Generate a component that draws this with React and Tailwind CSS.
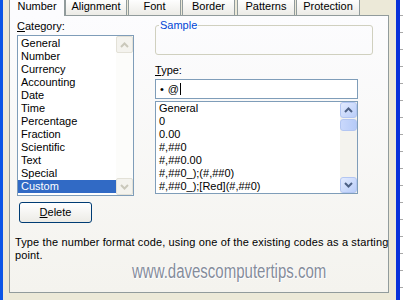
import React from "react";

function Chevron({ dir, color }) {
  return (
    <svg width="9" height="6" viewBox="0 0 9 6" className="block">
      <path
        d={dir === "up" ? "M1 5 L4.5 1.5 L8 5" : "M1 1 L4.5 4.5 L8 1"}
        fill="none"
        stroke={color}
        strokeWidth="2"
      />
    </svg>
  );
}

function Btn({ dir, disabled, h }) {
  return disabled ? (
    <div className={`w-[17px] ${h} flex items-center justify-center rounded-[2px] border border-[#E3E1D7] bg-[#F4F3EE]`}>
      <Chevron dir={dir} color="#CAC8BB" />
    </div>
  ) : (
    <div className={`w-[17px] ${h} flex items-center justify-center rounded-[3px] border border-[#B3C6F2] bg-linear-to-br from-[#E3EBFE] to-[#B9CDF9]`}>
      <Chevron dir={dir} color="#4D6185" />
    </div>
  );
}

const categories = [
  "General",
  "Number",
  "Currency",
  "Accounting",
  "Date",
  "Time",
  "Percentage",
  "Fraction",
  "Scientific",
  "Text",
  "Special",
  "Custom",
];

const formats = [
  "General",
  "0",
  "0.00",
  "#,##0",
  "#,##0.00",
  "#,##0_);(#,##0)",
  "#,##0_);[Red](#,##0)",
];

export default function App() {
  return (
    <div className="w-[403px] h-[300px] flex overflow-hidden bg-[#ECE9D8] font-['Liberation_Sans',Arial,sans-serif] text-[11px] leading-[13px] text-black">
      <div className="w-[3px] h-full shrink-0 bg-[#0A55E6]" />
      <div className="w-[393px] h-full shrink-0 flex flex-col pl-[6px] pr-[7px]">
        {/* tabs */}
        <div className="h-[15px] flex items-start shrink-0">
          <div className="relative z-10 w-[56px] h-[16px] bg-[#FCFCFE] border-x border-[#919B9C] text-center">
            Number
          </div>
          <div className="w-[62px] h-[15px] bg-linear-to-b from-[#FEFEFE] to-[#ECEBE6] border-x border-[#919B9C] text-center">
            Alignment
          </div>
          <div className="ml-[1px] w-[53px] h-[15px] bg-linear-to-b from-[#FEFEFE] to-[#ECEBE6] border-x border-[#919B9C] text-center">
            Font
          </div>
          <div className="ml-[1px] w-[53px] h-[15px] bg-linear-to-b from-[#FEFEFE] to-[#ECEBE6] border-x border-[#919B9C] text-center">
            Border
          </div>
          <div className="ml-[2px] w-[58px] h-[15px] bg-linear-to-b from-[#FEFEFE] to-[#ECEBE6] border-x border-[#919B9C] text-center">
            Patterns
          </div>
          <div className="ml-[1px] w-[64px] h-[15px] bg-linear-to-b from-[#FEFEFE] to-[#ECEBE6] border-x border-[#919B9C] text-center">
            Protection
          </div>
        </div>

        {/* panel */}
        <div className="relative h-[278px] shrink-0 border border-[#919B9C] bg-linear-to-b from-[#FCFCFE] to-[#F4F3EE] pl-[5px]">
          <div className="flex">
            {/* left column */}
            <div className="ml-[2px] w-[117px] pt-[4px]">
              <div>
                <span className="underline">C</span>ategory:
              </div>
              <div className="mt-[2px] h-[161px] border border-[#7F9DB9] bg-white flex">
                <div className="flex-1 pt-[1px]">
                  {categories.map((c) => (
                    <div
                      key={c}
                      className={`h-[13px] pl-[3px] whitespace-nowrap ${
                        c === "Custom" ? "bg-[#316AC5] text-white" : ""
                      }`}
                    >
                      {c}
                    </div>
                  ))}
                </div>
                <div className="w-[17px] bg-[#FCFCFA] flex flex-col justify-between">
                  <Btn dir="up" disabled h="h-[17px]" />
                  <Btn dir="down" disabled h="h-[17px]" />
                </div>
              </div>
              <div className="mt-[6px] ml-[2px] w-[73px] h-[21px] rounded-[3px] border border-[#003C74] bg-linear-to-b from-[#FFFFFF] to-[#ECEBE6] flex items-center justify-center">
                <span>
                  <span className="underline">D</span>elete
                </span>
              </div>
            </div>

            {/* right column */}
            <div className="ml-[21px] w-[218px] pt-[9px]">
              <div className="relative h-[30px] rounded-[3px] border border-[#D0D0BF]">
                <div className="absolute left-[3px] top-[-7px] px-[1px] bg-[#FCFCFD] text-[#0046D5]">
                  Sample
                </div>
              </div>
              <div className="mt-[9px]">
                <span className="underline">T</span>ype:
              </div>
              <div className="mt-[2px] w-[203px] h-[20px] border border-[#7F9DB9] bg-white flex items-center pl-[4px]">
                <span>•</span>
                <span className="ml-[4px]">@</span>
                <span className="ml-[1px] w-[1px] h-[12px] bg-black" />
              </div>
              <div className="mt-[2px] w-[203px] h-[93px] border border-[#7F9DB9] bg-white flex">
                <div className="flex-1">
                  {formats.map((f) => (
                    <div key={f} className="h-[13px] pl-[3px] whitespace-nowrap">
                      {f}
                    </div>
                  ))}
                </div>
                <div className="w-[17px] bg-[#F4F3EE] flex flex-col">
                  <Btn dir="up" h="h-[16px]" />
                  <div className="mt-[1px] w-[17px] h-[12px] rounded-[3px] border border-[#B3C6F2] bg-linear-to-r from-[#C9D8FC] to-[#B6CBF8]" />
                  <div className="flex-1" />
                  <Btn dir="down" h="h-[16px]" />
                </div>
              </div>
            </div>
          </div>

          <div className="mt-[13px] tracking-[0.13px]">
            <div className="whitespace-nowrap">
              Type the number format code, using one of the existing codes as a starting
            </div>
            <div>point.</div>
          </div>

          <div className="absolute left-[122px] top-[245px] origin-left scale-x-[0.75] whitespace-nowrap text-[20px] leading-[20px] text-[#858C9A] [text-shadow:0_0_1px_#fff,0_0_2px_#fff,1px_1px_1px_#fff]">
            www.davescomputertips.com
          </div>
        </div>
      </div>
      <div className="w-[4px] h-full shrink-0 bg-[#0831D9]" />
      <div className="flex-1 h-full bg-white flex flex-col">
        <div className="h-[16px] shrink-0 border-b border-[#A9A9A9]" />
        {Array.from({ length: 17 }).map((_, i) => (
          <div key={i} className="h-[17px] shrink-0 border-b border-[#A9A9A9]" />
        ))}
      </div>
    </div>
  );
}
